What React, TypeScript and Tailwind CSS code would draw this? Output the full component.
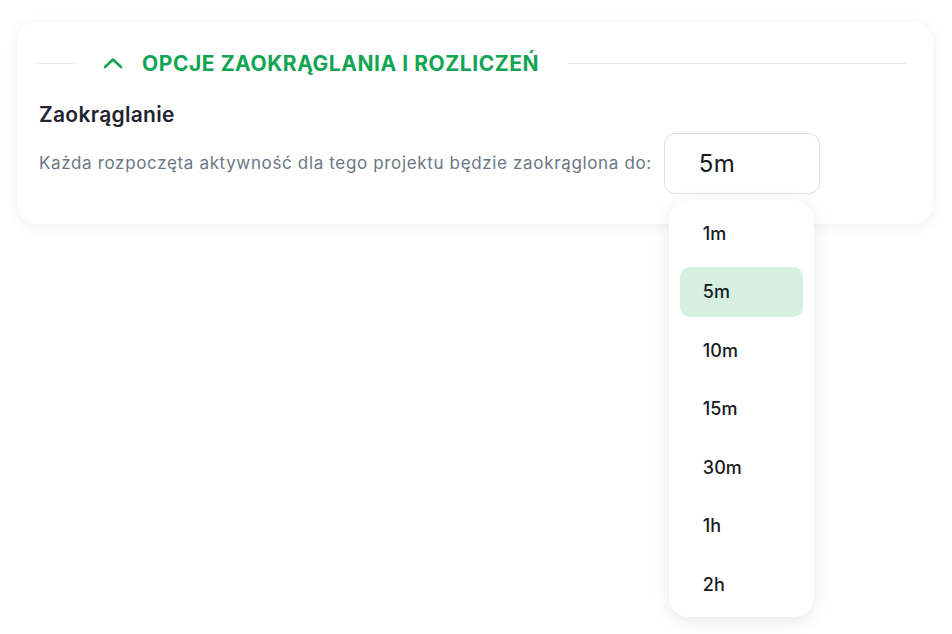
const options = ["1m", "5m", "10m", "15m", "30m", "1h", "2h"];

export default function App() {
  const selected = "5m";

  return (
    <div
      className="min-h-screen bg-white pl-[17px] pr-[19px] pt-[22px]"
      style={{ fontFamily: "Inter, 'Noto Sans', sans-serif" }}
    >
      <div className="rounded-[20px] bg-white px-5 pt-[30px] pb-[30px] shadow-[0_2px_14px_rgba(0,0,0,0.07)]">
        {/* section header */}
        <div className="flex h-[22px] items-center pr-[7px]">
          <div className="h-px w-[38px] bg-[#e5e7eb]" />
          <div className="flex items-center pl-[28px] pr-[29px]">
            <svg
              width="20"
              height="12"
              viewBox="0 0 20 12"
              fill="none"
              className="mr-[19px]"
            >
              <path
                d="M2 10L10 2.5L18 10"
                stroke="#11a452"
                strokeWidth="2.6"
                strokeLinecap="round"
                strokeLinejoin="round"
              />
            </svg>
            <span className="text-[21px] font-bold uppercase leading-none tracking-[0.55px] text-[#11a452]">
              Opcje zaokrąglania i rozliczeń
            </span>
          </div>
          <div className="h-px flex-1 bg-[#e5e7eb]" />
        </div>

        <div className="mt-[28px] pl-[2px]">
          <h3 className="text-[21px] font-semibold leading-[26px] tracking-[0.3px] text-[#1f2430]">
            Zaokrąglanie
          </h3>
          <div className="mt-[5px] flex items-center gap-3">
            <p className="text-[17px] tracking-[0.65px] text-[#6b7785]">
              Każda rozpoczęta aktywność dla tego projektu będzie zaokrąglona do:
            </p>
            <div className="relative">
              <div className="flex h-[61px] w-[156px] items-center rounded-[11px] border border-[#dde1e6] bg-white pl-[34px] text-[24px] tracking-[0.4px] text-[#16181d]">
                {selected}
              </div>

              {/* dropdown */}
              <div className="absolute left-[5px] top-[67px] z-10 flex w-[145px] flex-col gap-[8.5px] rounded-[20px] bg-white px-[11px] py-2 shadow-[0_4px_18px_rgba(0,0,0,0.09)]">
                {options.map((opt) => (
                  <div
                    key={opt}
                    className={
                      opt === selected
                        ? "flex h-[50px] items-center rounded-[10px] bg-[#d5efe1] pl-[23px] text-[18px] font-medium text-[#161b22]"
                        : "flex h-[50px] items-center rounded-[10px] pl-[23px] text-[18px] font-medium text-[#161b22]"
                    }
                  >
                    {opt}
                  </div>
                ))}
              </div>
            </div>
          </div>
        </div>
      </div>
    </div>
  );
}
